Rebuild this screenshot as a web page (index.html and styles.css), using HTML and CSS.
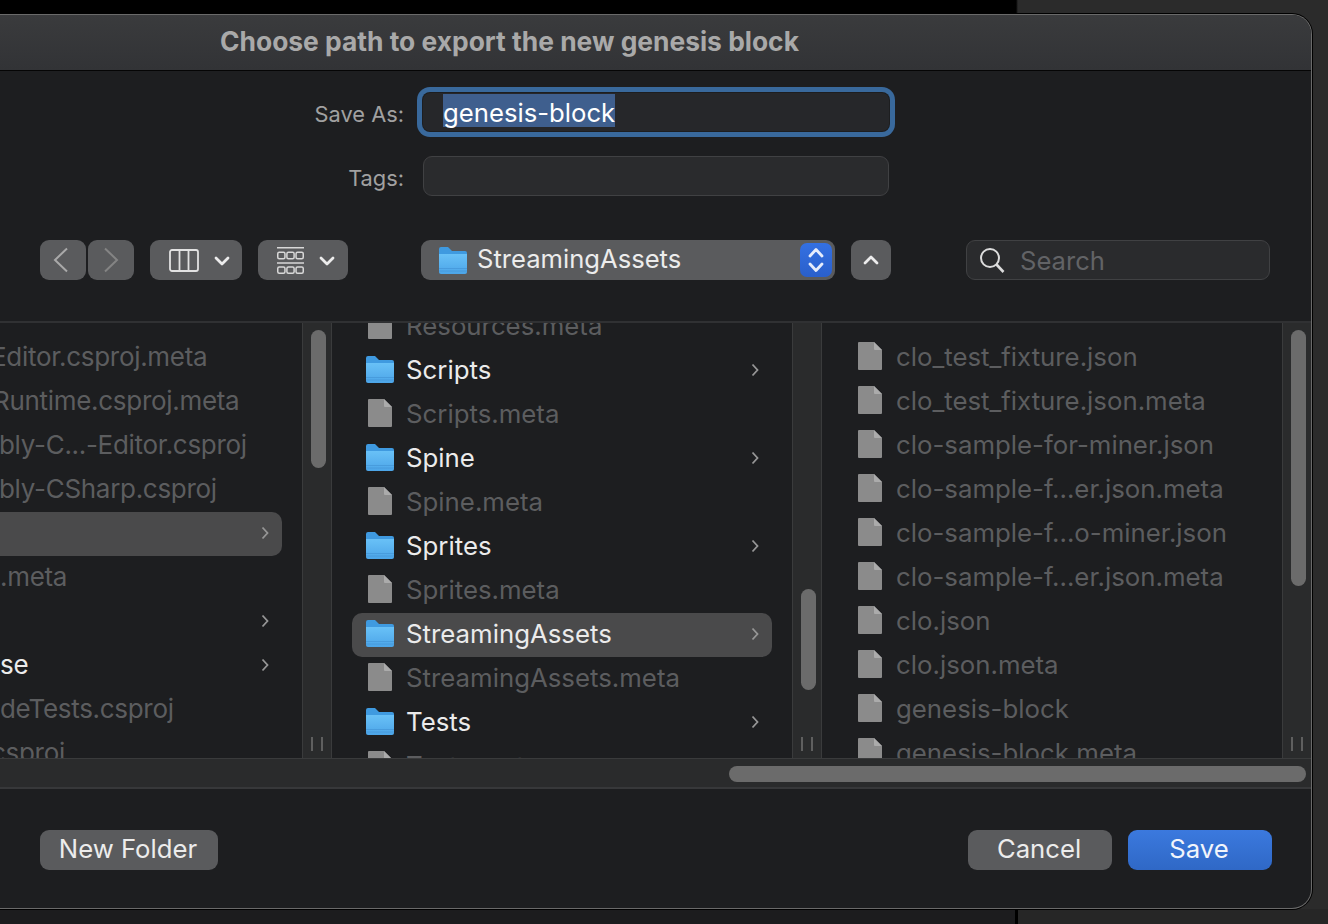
FILE: index.html
```html
<!doctype html>
<html lang="en">
  <head>
    <meta charset="UTF-8" />
    <meta name="viewport" content="width=device-width, initial-scale=1.0" />
    <title>Choose path to export the new genesis block</title>
    <link rel="stylesheet" href="styles.css">
  </head>
  <body>
    <svg class="defs" aria-hidden="true">
      <defs>
        <linearGradient id="folder-front" x1="0" y1="0" x2="0" y2="1">
          <stop offset="0" stop-color="#69c1f7" />
          <stop offset="1" stop-color="#4ca5e8" />
        </linearGradient>
      </defs>
      <symbol id="folder" viewBox="0 0 28 27">
        <path d="M0 2a2 2 0 0 1 2-2h7l4 4h13a2 2 0 0 1 2 2v4H0z" fill="#3f9ae0" />
        <path d="M0 7h28v18a2 2 0 0 1-2 2H2a2 2 0 0 1-2-2z" fill="url(#folder-front)" />
        <path d="M0 21.500h28M0 24h28" stroke="#3f8fd3" stroke-width=".8" opacity=".7" />
      </symbol>
      <symbol id="file" viewBox="0 0 24 28">
        <path d="M1 0h15l8 8v19a1 1 0 0 1-1 1H1a1 1 0 0 1-1-1V1a1 1 0 0 1 1-1z" fill="#8b8b8b" />
        <path d="M16 0l8 8h-7a1 1 0 0 1-1-1z" fill="#ababab" />
      </symbol>
      <symbol id="chev-right" viewBox="0 0 8 14">
        <path d="M1.5 1.5L6.5 7l-5 5.5" fill="none" stroke="#969696" stroke-width="1.8" />
      </symbol>
      <symbol id="caret" viewBox="0 0 16 10">
        <path d="M2 2l6 6 6-6" fill="none" stroke="#ececec" stroke-width="2.800" stroke-linecap="round" stroke-linejoin="round" />
      </symbol>
    </svg>

    <div class="dialog">
      <header class="titlebar">Choose path to export the new genesis block</header>

      <div class="form">
        <label class="form-label">Save As:</label>
        <div class="name-field"><span class="name-text">genesis-block</span></div>
        <label class="form-label">Tags:</label>
        <div class="tags-field"></div>
      </div>

      <div class="toolbar">
        <div class="nav-group">
          <button class="btn btn-back">
            <svg width="16" height="26" viewBox="0 0 16 26"><path d="M14 1.5L2 13l12 11.5" fill="none" stroke="#a9a9a9" stroke-width="2" /></svg>
          </button>
          <button class="btn btn-forward">
            <svg width="16" height="26" viewBox="0 0 16 26"><path d="M2 1.5L14 13 2 24.5" fill="none" stroke="#848484" stroke-width="2" /></svg>
          </button>
        </div>
        <button class="btn btn-view">
          <svg width="30" height="23" viewBox="0 0 30 23"><path d="M3 1h24a2 2 0 0 1 2 2v17a2 2 0 0 1-2 2H3a2 2 0 0 1-2-2V3a2 2 0 0 1 2-2zM10.500 1v21M19.500 1v21" fill="none" stroke="#e2e2e2" stroke-width="1.800" /></svg>
          <svg class="caret" width="16" height="10"><use href="#caret" /></svg>
        </button>
        <button class="btn btn-group">
          <svg width="27" height="27" viewBox="0 0 27 27" fill="none" stroke="#d8d8d8" stroke-width="1.500">
            <path d="M0 .75h27M0 16h27" />
            <rect x=".75" y="5.250" width="7.200" height="6.500" rx="1.500" />
            <rect x="9.900" y="5.250" width="7.200" height="6.500" rx="1.500" />
            <rect x="19.050" y="5.250" width="7.200" height="6.500" rx="1.500" />
            <rect x=".75" y="20" width="7.200" height="6.250" rx="1.500" />
            <rect x="9.900" y="20" width="7.200" height="6.250" rx="1.500" />
            <rect x="19.050" y="20" width="7.200" height="6.250" rx="1.500" />
          </svg>
          <svg class="caret" width="16" height="10"><use href="#caret" /></svg>
        </button>
        <div class="path-popup">
          <svg class="path-folder" width="28" height="27"><use href="#folder" /></svg>
          <span class="path-name">StreamingAssets</span>
          <span class="stepper">
            <svg width="18" height="28" viewBox="0 0 18 28" fill="none" stroke="#e6ecfb" stroke-width="2.800" stroke-linecap="round" stroke-linejoin="round"><path d="M3 10l6-6.500 6 6.500M3 18l6 6.500 6-6.500" /></svg>
          </span>
        </div>
        <button class="btn btn-up">
          <svg width="16" height="10" viewBox="0 0 16 10"><path d="M2 8l6-6 6 6" fill="none" stroke="#ececec" stroke-width="2.800" stroke-linecap="round" stroke-linejoin="round" /></svg>
        </button>
        <div class="search">
          <svg width="26" height="26" viewBox="0 0 26 26" fill="none" stroke="#dcdcdc"><circle cx="11" cy="11" r="9" stroke-width="2" /><path d="M17.500 17.500l7 7.500" stroke-width="2.600" /></svg>
          <span class="search-text">Search</span>
        </div>
      </div>

      <div class="browser">
        <div class="columns">
          <section class="col col-first">
            <div class="list">
              <div class="row row-dim"><span class="name shift-9">Editor.csproj.meta</span></div>
              <div class="row row-dim"><span class="name shift-7">Runtime.csproj.meta</span></div>
              <div class="row row-dim"><span class="name shift-1">bly-C...-Editor.csproj</span></div>
              <div class="row row-dim"><span class="name shift-1">bly-CSharp.csproj</span></div>
              <div class="row row-selected"><svg class="chev" width="8" height="14"><use href="#chev-right" /></svg></div>
              <div class="row row-dim"><span class="name">.meta</span></div>
              <div class="row"><svg class="chev" width="8" height="14"><use href="#chev-right" /></svg></div>
              <div class="row"><span class="name">se</span><svg class="chev" width="8" height="14"><use href="#chev-right" /></svg></div>
              <div class="row row-dim"><span class="name">deTests.csproj</span></div>
              <div class="row row-dim"><span class="name shift-9">csproj</span></div>
            </div>
          </section>
          <div class="track">
            <div class="thumb thumb-first"></div>
            <div class="grip"></div>
          </div>

          <section class="col col-middle">
            <div class="list list-scrolled">
              <div class="row row-dim"><svg class="icon file" width="24" height="28"><use href="#file" /></svg><span class="name">Resources.meta</span></div>
              <div class="row"><svg class="icon" width="28" height="27"><use href="#folder" /></svg><span class="name">Scripts</span><svg class="chev" width="8" height="14"><use href="#chev-right" /></svg></div>
              <div class="row row-dim"><svg class="icon file" width="24" height="28"><use href="#file" /></svg><span class="name">Scripts.meta</span></div>
              <div class="row"><svg class="icon" width="28" height="27"><use href="#folder" /></svg><span class="name">Spine</span><svg class="chev" width="8" height="14"><use href="#chev-right" /></svg></div>
              <div class="row row-dim"><svg class="icon file" width="24" height="28"><use href="#file" /></svg><span class="name">Spine.meta</span></div>
              <div class="row"><svg class="icon" width="28" height="27"><use href="#folder" /></svg><span class="name">Sprites</span><svg class="chev" width="8" height="14"><use href="#chev-right" /></svg></div>
              <div class="row row-dim"><svg class="icon file" width="24" height="28"><use href="#file" /></svg><span class="name">Sprites.meta</span></div>
              <div class="row row-selected"><svg class="icon" width="28" height="27"><use href="#folder" /></svg><span class="name">StreamingAssets</span><svg class="chev" width="8" height="14"><use href="#chev-right" /></svg></div>
              <div class="row row-dim"><svg class="icon file" width="24" height="28"><use href="#file" /></svg><span class="name">StreamingAssets.meta</span></div>
              <div class="row"><svg class="icon" width="28" height="27"><use href="#folder" /></svg><span class="name">Tests</span><svg class="chev" width="8" height="14"><use href="#chev-right" /></svg></div>
              <div class="row row-dim"><svg class="icon file" width="24" height="28"><use href="#file" /></svg><span class="name">Tests.meta</span></div>
            </div>
          </section>
          <div class="track">
            <div class="thumb thumb-middle"></div>
            <div class="grip"></div>
          </div>

          <section class="col col-last">
            <div class="list">
              <div class="row row-dim"><svg class="icon file" width="24" height="28"><use href="#file" /></svg><span class="name">clo_test_fixture.json</span></div>
              <div class="row row-dim"><svg class="icon file" width="24" height="28"><use href="#file" /></svg><span class="name">clo_test_fixture.json.meta</span></div>
              <div class="row row-dim"><svg class="icon file" width="24" height="28"><use href="#file" /></svg><span class="name">clo-sample-for-miner.json</span></div>
              <div class="row row-dim"><svg class="icon file" width="24" height="28"><use href="#file" /></svg><span class="name">clo-sample-f...er.json.meta</span></div>
              <div class="row row-dim"><svg class="icon file" width="24" height="28"><use href="#file" /></svg><span class="name">clo-sample-f...o-miner.json</span></div>
              <div class="row row-dim"><svg class="icon file" width="24" height="28"><use href="#file" /></svg><span class="name">clo-sample-f...er.json.meta</span></div>
              <div class="row row-dim"><svg class="icon file" width="24" height="28"><use href="#file" /></svg><span class="name">clo.json</span></div>
              <div class="row row-dim"><svg class="icon file" width="24" height="28"><use href="#file" /></svg><span class="name">clo.json.meta</span></div>
              <div class="row row-dim"><svg class="icon file" width="24" height="28"><use href="#file" /></svg><span class="name">genesis-block</span></div>
              <div class="row row-dim"><svg class="icon file" width="24" height="28"><use href="#file" /></svg><span class="name">genesis-block.meta</span></div>
            </div>
          </section>
          <div class="track track-last">
            <div class="thumb thumb-last"></div>
            <div class="grip"></div>
          </div>
        </div>

        <div class="hscroll">
          <div class="hthumb"></div>
        </div>
      </div>

      <footer class="footer">
        <button class="btn btn-text">New Folder</button>
        <button class="btn btn-text btn-cancel">Cancel</button>
        <button class="btn btn-text btn-save">Save</button>
      </footer>
    </div>
  </body>
</html>
```

FILE: styles.css
```css
:root {
  font-family: Inter, "Liberation Sans", sans-serif;
}

html,
body {
  height: 100%;
}

body {
  margin: 0;
  overflow: hidden;
  padding-top: 14px;
  box-sizing: border-box;
  background:
    linear-gradient(90deg, #1c1c1e 0 1015px, #000 1015px 1018px, #262626 1018px) left bottom / 100% 15px no-repeat,
    linear-gradient(90deg, #000 0 1016px, #2b2b2b 1018px);
}

.defs {
  position: absolute;
  width: 0;
  height: 0;
}

.dialog {
  width: 1312px;
  height: 895px;
  box-sizing: border-box;
  display: flex;
  flex-direction: column;
  overflow: hidden;
  background: #1d1e20;
  border: 1px solid #6a6a6a;
  border-left: 0;
  border-radius: 0 20px 20px 0;
  box-shadow: 0 0 0 1px #000;
}

.titlebar {
  height: 56px;
  flex: none;
  box-sizing: border-box;
  padding: 0 0 4px 220px;
  display: flex;
  align-items: center;
  background: linear-gradient(#3a3b3d, #323336);
  border-bottom: 1px solid #050505;
  color: #a9a9a9;
  font-size: 26.4px;
  font-weight: 700;
}

.form {
  display: grid;
  grid-template-columns: 404px 466px;
  column-gap: 19px;
  row-gap: 25px;
  padding-top: 22px;
  align-items: center;
}

.form-label {
  padding-top: 4px;
  text-align: right;
  color: #a1a1a1;
  font-size: 21.8px;
}

.name-field {
  height: 38px;
  box-sizing: border-box;
  display: flex;
  align-items: center;
  padding-left: 20px;
  background: #26272a;
  border-radius: 7px;
  box-shadow: 0 0 0 1px #1d1e20, 0 0 0 6px #39699c;
}

.name-text {
  display: block;
  height: 33px;
  margin-bottom: 3px;
  background: #3f5f8e;
  color: #fff;
  font-size: 25.7px;
  line-height: 37px;
}

.tags-field {
  height: 40px;
  box-sizing: border-box;
  background: #2a2b2d;
  border: 1px solid #404143;
  border-radius: 9px;
}

.toolbar {
  display: flex;
  align-items: center;
  margin-top: 44px;
  padding-left: 40px;
  height: 40px;
  flex: none;
}

.btn {
  display: flex;
  align-items: center;
  justify-content: center;
  height: 40px;
  padding: 0;
  border: 0;
  border-radius: 9px;
  background: #5a5b5d;
  color: #ececec;
  font-family: inherit;
}

.nav-group {
  display: flex;
  gap: 2px;
}

.btn-back,
.btn-forward {
  width: 46px;
}

.btn-back {
  padding-right: 4px;
}

.btn-view {
  width: 92px;
  margin-left: 16px;
  padding-left: 19px;
  justify-content: flex-start;
  gap: 15px;
}

.btn-group {
  width: 90px;
  margin-left: 16px;
  padding-left: 19px;
  justify-content: flex-start;
  gap: 15px;
}

.btn-view .caret,
.btn-group .caret {
  margin-top: 2px;
}

.path-popup {
  width: 414px;
  height: 40px;
  box-sizing: border-box;
  margin-left: 73px;
  padding: 0 3px 0 18px;
  display: flex;
  align-items: center;
  background: #5a5b5d;
  border-radius: 9px;
}

.path-name {
  margin-left: 10px;
  margin-bottom: 4px;
  color: #ececec;
  font-size: 25.6px;
}

.stepper {
  margin-left: auto;
  width: 32px;
  height: 34px;
  display: flex;
  align-items: center;
  justify-content: center;
  background: linear-gradient(#3470e2, #2a5fcb);
  border-radius: 7px;
}

.btn-up {
  width: 40px;
  margin-left: 16px;
}

.search {
  width: 304px;
  height: 40px;
  box-sizing: border-box;
  margin-left: 75px;
  padding-left: 12px;
  display: flex;
  align-items: center;
  gap: 15px;
  background: #2a2b2d;
  border: 1px solid #404143;
  border-radius: 9px;
}

.search-text {
  color: #626366;
  font-size: 25.6px;
}

.browser {
  margin-top: 41px;
  border-top: 2px solid #303133;
  flex: none;
}

.columns {
  display: flex;
  height: 435px;
}

.col {
  overflow: hidden;
  flex: none;
}

.col-first {
  width: 302px;
  letter-spacing: -0.3px;
}

.col-middle,
.col-last {
  width: 460px;
}

.list {
  padding-top: 13px;
}

.list-scrolled {
  padding-top: 0;
  margin-top: -18px;
}

.row {
  height: 44px;
  margin: 0 20px;
  padding-left: 14px;
  display: flex;
  align-items: center;
  color: #ebebeb;
  font-size: 25.8px;
  white-space: nowrap;
  border-radius: 10px;
}

.col-first .row {
  margin-left: -20px;
  padding-left: 20px;
  font-size: 26px;
}

.row-dim {
  color: #5c5d5f;
}

.row-selected {
  background: #4a4a4b;
}

.name {
  margin-bottom: 4px;
}

/* names in the first column are cut by the left edge of the window */
.shift-1 {
  margin-left: -1px;
}

.shift-7 {
  margin-left: -7px;
}

.shift-9 {
  margin-left: -9px;
}

.icon {
  flex: none;
  margin-right: 12px;
  margin-bottom: 4px;
}

.icon.file {
  margin-left: 2px;
  margin-right: 14px;
}

.chev {
  margin-left: auto;
  margin-right: 13px;
  margin-bottom: 2px;
  flex: none;
}

.track {
  width: 30px;
  flex: none;
  box-sizing: border-box;
  padding-left: 8px;
  display: flex;
  flex-direction: column;
  align-items: flex-start;
  background: #2a2b2c;
  border-left: 1px solid #3a3b3c;
  border-right: 1px solid #3a3b3c;
}

.track-last {
  border-right: 0;
}

.thumb {
  width: 15px;
  border-radius: 8px;
  background: #6b6b6b;
}

.thumb-first {
  margin-top: 7px;
  height: 138px;
}

.thumb-middle {
  margin-top: 266px;
  height: 101px;
}

.thumb-last {
  margin-top: 7px;
  height: 256px;
}

.grip {
  margin-top: auto;
  margin-bottom: 7px;
  width: 12px;
  height: 14px;
  box-sizing: border-box;
  border-left: 2px solid #5f5f5f;
  border-right: 2px solid #5f5f5f;
}

.hscroll {
  height: 31px;
  box-sizing: border-box;
  padding: 7px 5px 0 729px;
  background: #2a2b2c;
  border-top: 1px solid #3a3b3c;
  border-bottom: 2px solid #37383a;
}

.hthumb {
  height: 16px;
  border-radius: 8px;
  background: #6b6b6b;
}

.footer {
  flex: 1;
  display: flex;
  align-items: flex-start;
  gap: 16px;
  padding: 41px 39px 0 40px;
}

.btn-text {
  padding: 0 2px 4px 0;
  font-size: 25.7px;
}

.btn-text:first-child {
  width: 178px;
  margin-right: auto;
}

.btn-cancel,
.btn-save {
  width: 144px;
}

.btn-save {
  background: linear-gradient(#3b79de, #2f68c6);
  color: #f2f5fb;
}
```
